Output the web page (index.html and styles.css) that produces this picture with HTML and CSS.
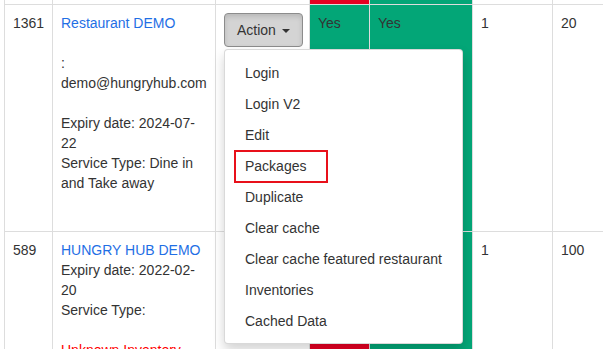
FILE: index.html
```html
<!DOCTYPE html>
<html lang="en">
<head>
    <meta charset="UTF-8">
    <meta name="viewport" content="width=device-width, initial-scale=1.0">
    <title>Restaurants - Hungry Hub Admin</title>
    <link rel="stylesheet" href="styles.css">
</head>
<body>
    <div class="page">
        <table class="restaurants">
            <colgroup>
                <col class="col-id">
                <col class="col-name">
                <col class="col-action">
                <col class="col-flag">
                <col class="col-flag-wide">
                <col class="col-num">
                <col class="col-num">
            </colgroup>
            <tr class="row-prev">
                <td></td>
                <td></td>
                <td></td>
                <td class="no"></td>
                <td class="yes"></td>
                <td></td>
                <td></td>
            </tr>
            <tr class="row-first">
                <td>1361</td>
                <td>
                    <a href="#">Restaurant DEMO</a><br><br>
                    : demo@hungryhub.com<br><br>
                    Expiry date: 2024-07-22<br>
                    Service Type: Dine in and Take away
                </td>
                <td>
                    <div class="dropdown open">
                        <button class="btn">Action <span class="caret"></span></button>
                        <ul class="dropdown-menu">
                            <li><a href="#">Login</a></li>
                            <li><a href="#">Login V2</a></li>
                            <li><a href="#">Edit</a></li>
                            <li class="marked"><a href="#">Packages</a><span class="mark-box"></span></li>
                            <li><a href="#">Duplicate</a></li>
                            <li><a href="#">Clear cache</a></li>
                            <li><a href="#">Clear cache featured restaurant</a></li>
                            <li><a href="#">Inventories</a></li>
                            <li><a href="#">Cached Data</a></li>
                        </ul>
                    </div>
                </td>
                <td class="yes">Yes</td>
                <td class="yes">Yes</td>
                <td>1</td>
                <td>20</td>
            </tr>
            <tr>
                <td>589</td>
                <td>
                    <a href="#">HUNGRY HUB DEMO</a><br>
                    Expiry date: 2022-02-20<br>
                    Service Type: <br><br>
                    <span class="warn">Unknown Inventory</span>
                </td>
                <td></td>
                <td class="no"></td>
                <td class="yes"></td>
                <td>1</td>
                <td>100</td>
            </tr>
        </table>
    </div>
</body>
</html>
```

FILE: styles.css
```css
* {
    margin: 0;
    padding: 0;
    box-sizing: border-box;
}

body {
    font-family: "Liberation Sans", Arial, sans-serif;
    font-size: 14px;
    line-height: 20px;
    color: #333;
    background: #fff;
    overflow: hidden;
}

.page {
    padding-left: 4px;
}

a {
    color: #1f6fe5;
    text-decoration: none;
}

.restaurants {
    border-collapse: collapse;
    table-layout: fixed;
    width: 629px;
}

.col-id { width: 48px; }
.col-name { width: 163px; }
.col-action { width: 94px; }
.col-flag { width: 60px; }
.col-flag-wide { width: 103px; }
.col-num { width: 80px; }

.restaurants td {
    border: 1px solid #ddd;
    padding: 8px;
    vertical-align: top;
}

.row-prev td {
    height: 4px;
    padding: 0;
    border-top: 0;
}

.row-first {
    height: 227px;
}

.yes {
    background-color: #03a677;
}

.no {
    background-color: #e60023;
}

.warn {
    color: #f00;
}

/* action dropdown */
.dropdown {
    position: relative;
    display: inline-block;
}

.btn {
    display: inline-block;
    font-family: inherit;
    font-size: 14px;
    line-height: 20px;
    color: #333;
    white-space: nowrap;
    padding: 6px 12px;
    background-color: #fff;
    border: 1px solid #ccc;
    border-radius: 4px;
}

.open .btn {
    background-color: #d4d4d4;
    border-color: #8c8c8c;
    box-shadow: inset 0 3px 5px rgba(0,0,0,0.125);
}

.caret {
    display: inline-block;
    width: 0;
    height: 0;
    margin-left: 2px;
    vertical-align: middle;
    border-top: 4px solid;
    border-right: 4px solid transparent;
    border-left: 4px solid transparent;
}

.dropdown-menu {
    display: none;
    position: absolute;
    top: 100%;
    left: 0;
    z-index: 1000;
    margin-top: 2px;
    padding: 8px 0 6px;
    list-style: none;
    background: #fff;
    border: 1px solid rgba(0,0,0,0.15);
    border-radius: 4px;
    box-shadow: 0 6px 12px rgba(0,0,0,0.175);
    white-space: nowrap;
}

.open .dropdown-menu {
    display: block;
}

.dropdown-menu li {
    position: relative;
}

.dropdown-menu a {
    display: block;
    padding: 5px 20px;
    line-height: 21px;
    color: #333;
}

.mark-box {
    position: absolute;
    left: 9px;
    top: -1px;
    width: 94px;
    height: 33px;
    border: 2px solid #e8101a;
}
```
